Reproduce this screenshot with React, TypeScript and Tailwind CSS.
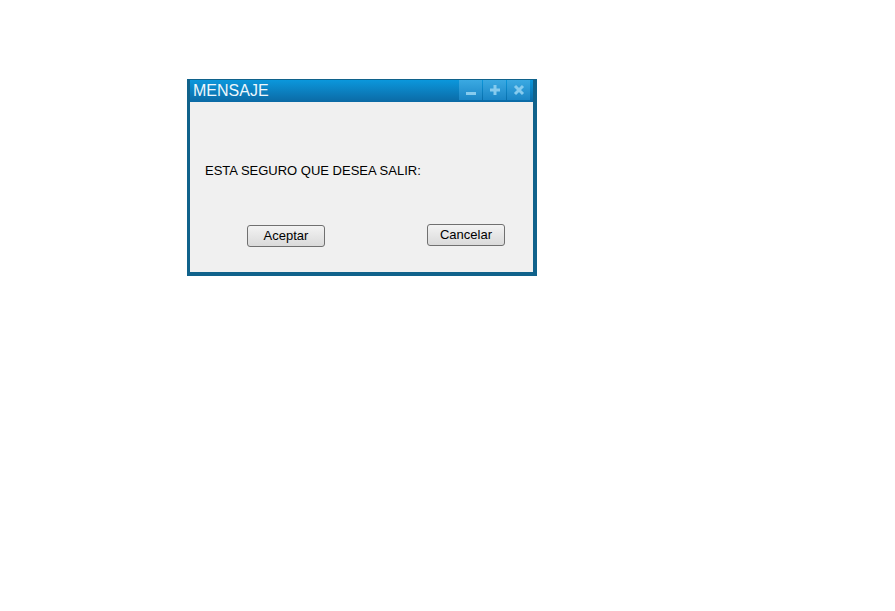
function TitleButton({ kind }: { kind: 'min' | 'max' | 'close' }) {
  return (
    <div className="flex h-[20px] w-[23px] items-center justify-center bg-gradient-to-b from-[#3aa9e2] to-[#1a86c6]">
      <svg width="12" height="12" viewBox="0 0 12 12" className="text-[#86cbee]">
        {kind === 'min' && <rect x="1" y="8" width="10" height="3" fill="currentColor" />}
        {kind === 'max' && (
          <path d="M4.5 1h3v3.5H11v3H7.5V11h-3V7.5H1v-3h3.5z" fill="currentColor" />
        )}
        {kind === 'close' && (
          <path d="M2 2l8 8M10 2l-8 8" stroke="currentColor" strokeWidth="3" />
        )}
      </svg>
    </div>
  );
}

function DialogButton({ label }: { label: string }) {
  return (
    <button className="h-[22px] w-[78px] rounded-[3px] border border-[#707070] bg-gradient-to-b from-[#f3f3f3] to-[#dadada] text-[13px] leading-none text-black">
      {label}
    </button>
  );
}

export default function App() {
  return (
    <div className="min-h-screen bg-white pl-[187px] pt-[79px] font-['Liberation_Sans',Arial,sans-serif]">
      <div className="w-[350px] border-x-[3px] border-b-[4px] border-t-[1px] border-[#10628b] border-r-[4px]">
        <div className="flex h-[22px] items-start justify-between bg-gradient-to-b from-[#0b97dc] to-[#0b6aa5]">
          <span className="pl-[3px] pt-[1px] text-[16px] leading-[20px] text-[#eef7fc]">MENSAJE</span>
          <div className="flex gap-px pr-[3px]">
            <TitleButton kind="min" />
            <TitleButton kind="max" />
            <TitleButton kind="close" />
          </div>
        </div>
        <div className="h-[170px] bg-[#f0f0f0]">
          <p className="pl-[15px] pt-[61px] text-[13px] leading-[16px] text-black">
            ESTA SEGURO QUE DESEA SALIR:
          </p>
          <div className="flex items-start pl-[57px] pr-[28px] pt-[43px]">
            <div className="pt-px">
              <DialogButton label="Aceptar" />
            </div>
            <div className="ml-auto">
              <DialogButton label="Cancelar" />
            </div>
          </div>
        </div>
      </div>
    </div>
  );
}
